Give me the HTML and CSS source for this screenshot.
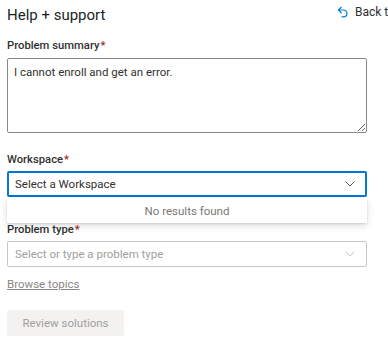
FILE: index.html
```html
<!DOCTYPE html>
<html lang="en">
<head>
    <meta charset="UTF-8">
    <meta name="viewport" content="width=device-width, initial-scale=1.0">
    <title>Help + support</title>
    <link rel="stylesheet" href="styles.css">
</head>
<body>
    <div class="page">
        <div class="page-header">
            <h1 class="page-title">Help + support</h1>
            <a href="#" class="back-link">
                <svg class="back-icon" width="11" height="12" viewBox="0 0 11 12" fill="none" stroke="#0078d4" stroke-width="1.2">
                    <path d="M4.5 1 L1.5 4 L4.5 7"/>
                    <path d="M1.5 4 H6.5 A3.4 3.4 0 0 1 6.5 10.8 H4.5"/>
                </svg>
                <span>Back to home</span>
            </a>
        </div>

        <form id="supportForm">
            <div class="form-group">
                <label for="summary" class="form-label">Problem summary<span class="required">*</span></label>
                <textarea id="summary" class="form-control summary">I cannot enroll and get an error.</textarea>
            </div>

            <div class="form-group workspace-group">
                <label class="form-label">Workspace<span class="required">*</span></label>
                <div class="dropdown is-open">
                    <div class="dropdown-field">
                        <span class="dropdown-text">Select a Workspace</span>
                        <svg class="chevron" width="10" height="6" viewBox="0 0 10 6" fill="none" stroke="#605e5c" stroke-width="1">
                            <path d="M0.5 0.5 L5 5 L9.5 0.5"/>
                        </svg>
                    </div>
                    <div class="dropdown-menu">No results found</div>
                </div>
            </div>

            <div class="form-group type-group">
                <label class="form-label">Problem type<span class="required">*</span></label>
                <div class="dropdown is-disabled">
                    <div class="dropdown-field">
                        <span class="dropdown-text placeholder">Select or type a problem type</span>
                        <svg class="chevron" width="10" height="6" viewBox="0 0 10 6" fill="none" stroke="#c8c6c4" stroke-width="1">
                            <path d="M0.5 0.5 L5 5 L9.5 0.5"/>
                        </svg>
                    </div>
                </div>
            </div>

            <a href="#" class="browse-link">Browse topics</a>

            <button type="button" class="btn" disabled>Review solutions</button>
        </form>
    </div>
</body>
</html>
```

FILE: styles.css
```css
html, body {
    overflow: hidden;
}
body {
    font-family: Roboto, "Open Sans", sans-serif;
    color: #323130;
    background: white;
    margin: 0;
    font-size: 11.5px;
}
.page {
    width: 360px;
    padding: 0 7px;
}
.page-header {
    display: flex;
    align-items: flex-start;
    justify-content: space-between;
    padding-top: 4px;
}
.page-title {
    margin: 0;
    font-size: 15px;
    font-weight: 400;
    line-height: 22px;
    color: #201f1e;
}
.back-link {
    flex: 0 0 30px;
    min-width: 0;
    display: flex;
    align-items: center;
    gap: 7px;
    white-space: nowrap;
    color: #323130;
    text-decoration: none;
    font-size: 12px;
    line-height: 16px;
}
.back-icon {
    flex: none;
}
.form-group {
    margin-top: 12px;
}
.workspace-group {
    margin-top: 19px;
}
.type-group {
    margin-top: 25px;
}
.form-label {
    display: block;
    font-size: 11.25px;
    font-weight: 500;
    line-height: 16px;
    margin-bottom: 3px;
}
.required {
    color: #a4262c;
    margin-left: 1px;
}
.form-control {
    display: block;
    width: 100%;
    box-sizing: border-box;
    font-family: inherit;
    font-size: 11.5px;
    color: #323130;
    border: 1px solid #8a8886;
    border-radius: 2px;
    padding: 5px 6px;
    outline: none;
}
.summary {
    height: 75px;
    margin-top: 4px;
    resize: vertical;
    line-height: 16px;
}
.dropdown {
    position: relative;
}
.dropdown-field {
    display: flex;
    align-items: center;
    justify-content: space-between;
    height: 26px;
    box-sizing: border-box;
    padding: 0 7px;
    border: 1px solid #c8c6c4;
    border-radius: 2px;
}
.is-open .dropdown-field {
    border: 2px solid #0078d4;
    padding: 0 6px;
}
.placeholder {
    color: #a19f9d;
}
.chevron {
    margin-right: 4px;
}
.dropdown-menu {
    position: absolute;
    top: 27px;
    left: 0;
    right: 0;
    height: 25px;
    background: white;
    box-shadow: 0 3px 7px rgba(0, 0, 0, 0.13), 0 0.6px 1.8px rgba(0, 0, 0, 0.11);
    display: flex;
    align-items: center;
    justify-content: center;
    color: #797775;
    z-index: 2;
}
.browse-link {
    display: inline-block;
    margin-top: 9px;
    line-height: 16px;
    color: #8a8886;
    text-decoration: underline;
}
.btn {
    display: block;
    margin-top: 18px;
    width: 117px;
    height: 26px;
    border: none;
    border-radius: 2px;
    background-color: #f3f2f1;
    color: #a19f9d;
    font-family: inherit;
    font-size: 11.5px;
    cursor: default;
}
```
